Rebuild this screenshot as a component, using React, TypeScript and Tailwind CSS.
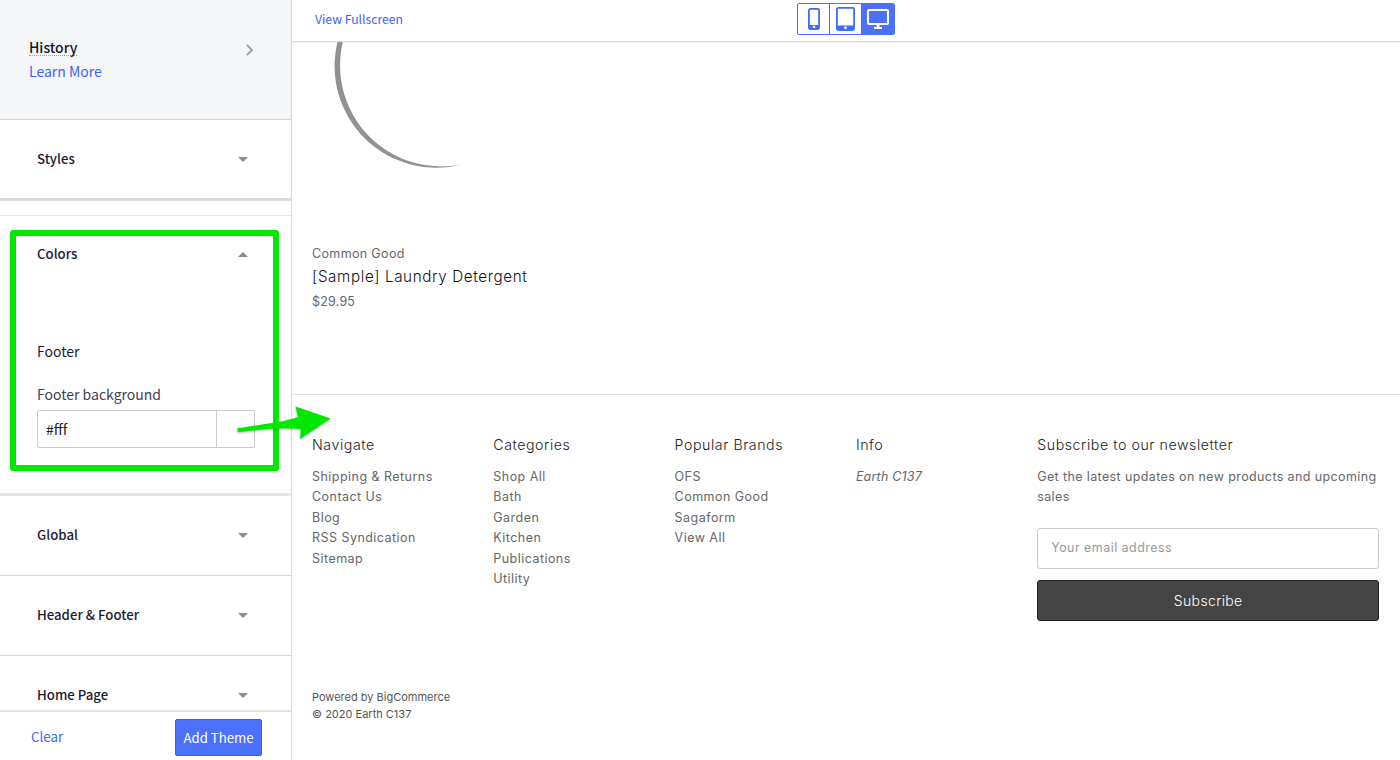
import React from "react";

const CaretIcon = ({ up = false }: { up?: boolean }) => (
  <svg viewBox="0 0 10 5" className="h-[5px] w-[10px]" fill="#86898f" aria-hidden>
    <path d={up ? "M0 5L5 0l5 5z" : "M0 0h10L5 5z"} />
  </svg>
);

const PhoneIcon = () => (
  <svg viewBox="0 0 12 22" className="h-[22px] w-3" fill="none" aria-hidden>
    <rect x="0.9" y="0.9" width="10.2" height="20.2" rx="1.5" stroke="#3f6cfb" strokeWidth="1.8" />
    <path d="M1 17h10v4H1z" fill="#3f6cfb" />
    <circle cx="6" cy="19" r="1.3" fill="#fff" />
  </svg>
);

const TabletIcon = () => (
  <svg viewBox="0 0 19 24" className="h-6 w-[19px]" fill="none" aria-hidden>
    <rect x="0.9" y="0.9" width="17.2" height="22.2" rx="1.5" stroke="#3f6cfb" strokeWidth="1.8" />
    <path d="M1 18.500h17v4.500H1z" fill="#3f6cfb" />
    <circle cx="9.5" cy="20.8" r="1.4" fill="#fff" />
  </svg>
);

const DesktopIcon = () => (
  <svg viewBox="0 0 22 20" className="h-5 w-[22px]" fill="none" aria-hidden>
    <rect x="1" y="1" width="20" height="14" rx="1" stroke="#fff" strokeWidth="2" />
    <path d="M9.500 15h3v3h2.500v2H7v-2h2.500z" fill="#fff" />
  </svg>
);

type SectionRowProps = { label: string; className?: string };

const SectionRow = ({ label, className = "" }: SectionRowProps) => (
  <div className={`flex h-20 shrink-0 items-center justify-between pr-[43px] pl-[37px] ${className}`}>
    <span className="pb-[1px] text-[13.2px] leading-5 font-medium">{label}</span>
    <CaretIcon />
  </div>
);

const columns: Array<{ title: string; links: string[] }> = [
  {
    title: "Navigate",
    links: ["Shipping & Returns", "Contact Us", "Blog", "RSS Syndication", "Sitemap"],
  },
  {
    title: "Categories",
    links: ["Shop All", "Bath", "Garden", "Kitchen", "Publications", "Utility"],
  },
  {
    title: "Popular Brands",
    links: ["OFS", "Common Good", "Sagaform", "View All"],
  },
];

const ColumnTitle = ({ children }: { children: React.ReactNode }) => (
  <h5 className="text-[14.2px] leading-5 font-light tracking-[0.56px] text-[#222]">{children}</h5>
);

const Sidebar = () => (
  <aside className="relative flex w-[292px] shrink-0 flex-col border-r border-[#d3d8e2] font-['Noto_Sans_CJK_SC','Noto_Sans',sans-serif] text-[#1c1a33]">
    <div className="flex h-[120px] shrink-0 justify-between border-b border-[#cfd4dd] bg-[#f5f6f8] pt-[35px] pr-[37px] pl-[29px]">
      <div>
        <div className="h-[21px] w-fit border-b border-dotted border-[#9b9ba6] text-[14px] leading-6 font-medium text-[#16151f]">
          History
        </div>
        <a className="mt-[3px] block text-[14px] leading-6 text-[#3c64f4]">Learn More</a>
      </div>
      <svg viewBox="0 0 8 12" className="mt-[9px] h-3 w-2" fill="none" aria-hidden>
        <path d="M1 1l5 5-5 5" stroke="#9b9ca2" strokeWidth="1.8" />
      </svg>
    </div>

    <SectionRow
      label="Styles"
      className="border-b-2 border-[#d6dae2] shadow-[0_1px_1px_rgba(0,0,0,0.12)]"
    />
    <div className="h-4 shrink-0 border-b border-[#e5e7ee]" />

    {/* Colors, expanded */}
    <div className="flex h-[280px] shrink-0 flex-col border-b-[3px] border-[#e3e6ed] pt-[28px] pr-[37px] pl-[37px]">
      <div className="flex items-center justify-between pr-[6px]">
        <span className="text-[13.2px] leading-5 font-medium">Colors</span>
        <CaretIcon up />
      </div>
      <div className="mt-[77px] text-[14px] leading-5">Footer</div>
      <label className="mt-[23px] text-[14px] leading-5 text-[#42405a]">Footer background</label>
      <div className="mt-[6px] flex h-[38px] w-[218px] rounded-[2px] border border-[#cbcbcf]">
        <div className="flex w-[179px] items-center border-r border-[#cbcbcf] pl-2 text-[14px] leading-5">
          #fff
        </div>
      </div>
    </div>

    <SectionRow label="Global" className="border-b border-[#d6dae4]" />
    <SectionRow label="Header & Footer" className="border-b border-[#d6dae4]" />
    <div className="h-[55px] overflow-hidden">
      <SectionRow label="Home Page" className="pb-[1px]" />
    </div>

    <div className="flex h-[50px] shrink-0 items-start justify-between border-t-2 border-[#e0e4ea] bg-white pt-[7px] pr-[29px] pl-[31px]">
      <a className="mt-2 text-[13.3px] leading-5 text-[#3c64f4]">Clear</a>
      <button className="h-[37px] w-[87px] rounded-[2px] border border-[#3360f5] bg-[#4b71fc] text-[13.2px] leading-5 text-white">
        Add Theme
      </button>
    </div>

    {/* Highlight and pointer over the color setting */}
    <div className="absolute top-[230px] left-[10px] h-[241px] w-[269px] rounded-[3px] border-[6px] border-[#00e800]" />
    <svg
      viewBox="0 0 100 40"
      className="absolute top-[402px] left-[234px] z-10 h-10 w-[100px] drop-shadow-[0_1px_1px_rgba(0,0,0,0.3)]"
      aria-hidden
    >
      <path
        d="M3.500 26.500Q4 25.500 6 26L31 22Q50 20 64 15L61.500 4.500L96.500 16.500L66 37L67 27Q50 25.500 33 27L5 30Q3 30 3.500 26.500z"
        fill="#00e800"
      />
    </svg>
  </aside>
);

const Footer = () => (
  <footer className="flex border-t border-[#dfdfdf] pt-10 pl-5">
    {columns.map((col) => (
      <div key={col.title} className="w-[181.3px] shrink-0">
        <ColumnTitle>{col.title}</ColumnTitle>
        <ul className="mt-3 text-[12.5px] leading-[20.4px] tracking-[0.46px] text-[#666]">
          {col.links.map((link) => (
            <li key={link}>{link}</li>
          ))}
        </ul>
      </div>
    ))}
    <div className="w-[181.3px] shrink-0">
      <ColumnTitle>Info</ColumnTitle>
      <address className="mt-3 text-[12.5px] leading-[20.4px] tracking-[0.2px] text-[#666] italic">
        Earth C137
      </address>
    </div>
    <div className="w-[342px] shrink-0">
      <ColumnTitle>Subscribe to our newsletter</ColumnTitle>
      <p className="mt-3 text-[12.5px] leading-[20.4px] tracking-[0.38px] whitespace-nowrap text-[#666]">
        Get the latest updates on new products and upcoming
        <br />
        sales
      </p>
      <div className="mt-5 flex h-[41px] items-center rounded-[3px] border border-[#cacaca] pl-[13px] text-[12.5px] tracking-[0.45px] text-[#999]">
        Your email address
      </div>
      <button className="mt-[11px] h-[41px] w-full rounded-[3px] border border-[#222] bg-[#444] text-[14px] font-light tracking-[0.35px] text-white">
        Subscribe
      </button>
    </div>
  </footer>
);

const App: React.FC = () => {
  return (
    <div className="flex h-[760px] w-[1400px] overflow-hidden bg-white">
      <Sidebar />

      <main className="flex min-w-0 flex-1 flex-col font-['Inter',sans-serif]">
        <header className="flex h-[42px] shrink-0 border-b border-[#dddfe5] pt-[3px] pl-[23px] shadow-[0_1px_1px_rgba(0,0,0,0.06)]">
          <a className="mt-[6px] w-[482px] font-['Noto_Sans_CJK_SC','Noto_Sans',sans-serif] text-[12.2px] leading-5 text-[#3c64f4]">
            View Fullscreen
          </a>
          <div className="flex h-8 w-[98px] overflow-hidden rounded-[2px] border border-[#4b71fc]">
            <span className="flex w-8 items-center justify-center border-r border-[#4b71fc]">
              <PhoneIcon />
            </span>
            <span className="flex w-8 items-center justify-center border-r border-[#4b71fc]">
              <TabletIcon />
            </span>
            <span className="flex w-8 items-center justify-center bg-[#4b71fc]">
              <DesktopIcon />
            </span>
          </div>
        </header>

        {/* Product card, cut off by the scroll position */}
        <section className="h-[352px] shrink-0 pl-5">
          <svg viewBox="312 42 200 140" className="h-[140px] w-[200px]" aria-hidden>
            <path
              d="M337.500 42A101.500 101.500 0 0 0 463 164A101 101 0 0 1 342.800 42z"
              fill="#919191"
            />
          </svg>
          <div className="mt-[62px] text-[12.5px] leading-5 tracking-[0.35px] text-[#666]">
            Common Good
          </div>
          <h4 className="mt-[1px] text-[15.2px] leading-6 font-light tracking-[0.62px] text-[#111]">
            [Sample] Laundry Detergent
          </h4>
          <div className="mt-[3px] text-[12.5px] leading-5 tracking-[0.2px] text-[#666]">$29.95</div>
        </section>

        <Footer />

        <div className="mt-[68px] pl-5 text-[11px] leading-[17.500px] text-[#555]">
          <p>Powered by BigCommerce</p>
          <p>© 2020 Earth C137</p>
        </div>
      </main>
    </div>
  );
};

export default App;
